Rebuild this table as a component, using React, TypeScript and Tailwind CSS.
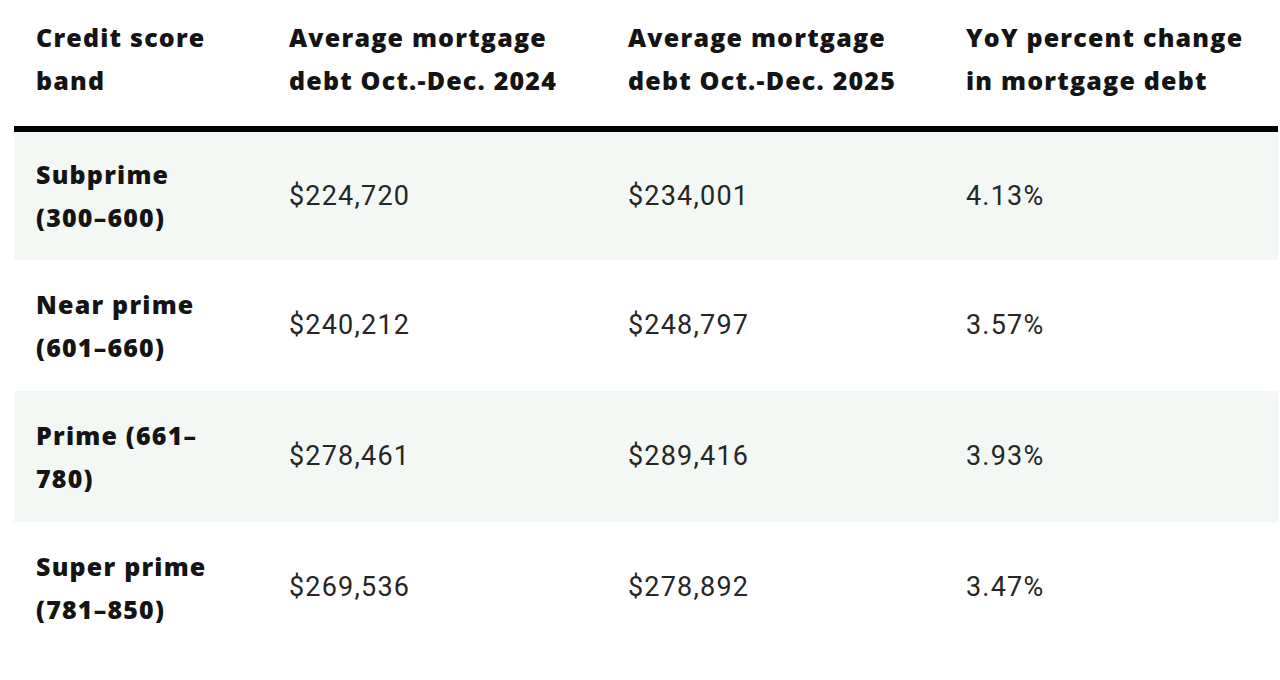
const rows = [
  { band: ["Subprime", "(300–600)"], y2024: "$224,720", y2025: "$234,001", change: "4.13%" },
  { band: ["Near prime", "(601–660)"], y2024: "$240,212", y2025: "$248,797", change: "3.57%" },
  { band: ["Prime (661–", "780)"], y2024: "$278,461", y2025: "$289,416", change: "3.93%" },
  { band: ["Super prime", "(781–850)"], y2024: "$269,536", y2025: "$278,892", change: "3.47%" },
];

const boldFont = { fontFamily: "'Open Sans', 'Liberation Sans', sans-serif" };

export default function App() {
  return (
    <div className="w-[1280px] h-[680px] bg-white pl-[14px] pt-[16px]" style={{ fontFamily: "Roboto, 'Liberation Sans', sans-serif" }}>
      <table className="w-[1264px] table-fixed border-collapse text-[#141414]">
        <colgroup>
          <col className="w-[253px]" />
          <col className="w-[339px]" />
          <col className="w-[338px]" />
          <col className="w-[334px]" />
        </colgroup>
        <thead>
          <tr className="border-b-[6px] border-black text-left align-top" style={boldFont}>
            <th className="pl-[22px] pb-[24px] text-[25px] leading-[43px] font-extrabold tracking-[1.2px]">Credit score<br />band</th>
            <th className="pl-[22px] pb-[24px] text-[25px] leading-[43px] font-extrabold tracking-[1.2px]">Average mortgage<br />debt Oct.-Dec. 2024</th>
            <th className="pl-[22px] pb-[24px] text-[25px] leading-[43px] font-extrabold tracking-[1.2px]">Average mortgage<br />debt Oct.-Dec. 2025</th>
            <th className="pl-[22px] pb-[24px] text-[25px] leading-[43px] font-extrabold tracking-[1.2px]">YoY percent change<br />in mortgage debt</th>
          </tr>
        </thead>
        <tbody>
          {rows.map((r, i) => (
            <tr key={i} className={i % 2 === 0 ? "h-[131px] bg-[#f3f8f5]" : "h-[131px] bg-white"}>
              <td className="pl-[22px] text-[25px] leading-[43px] font-extrabold tracking-[1.2px]" style={boldFont}>
                {r.band[0]}
                <br />
                {r.band[1]}
              </td>
              <td className="pl-[22px] text-[27px] tracking-[1.2px] text-[#262626]">{r.y2024}</td>
              <td className="pl-[22px] text-[27px] tracking-[1.2px] text-[#262626]">{r.y2025}</td>
              <td className="pl-[22px] text-[27px] tracking-[1.2px] text-[#262626]">{r.change}</td>
            </tr>
          ))}
        </tbody>
      </table>
    </div>
  );
}
